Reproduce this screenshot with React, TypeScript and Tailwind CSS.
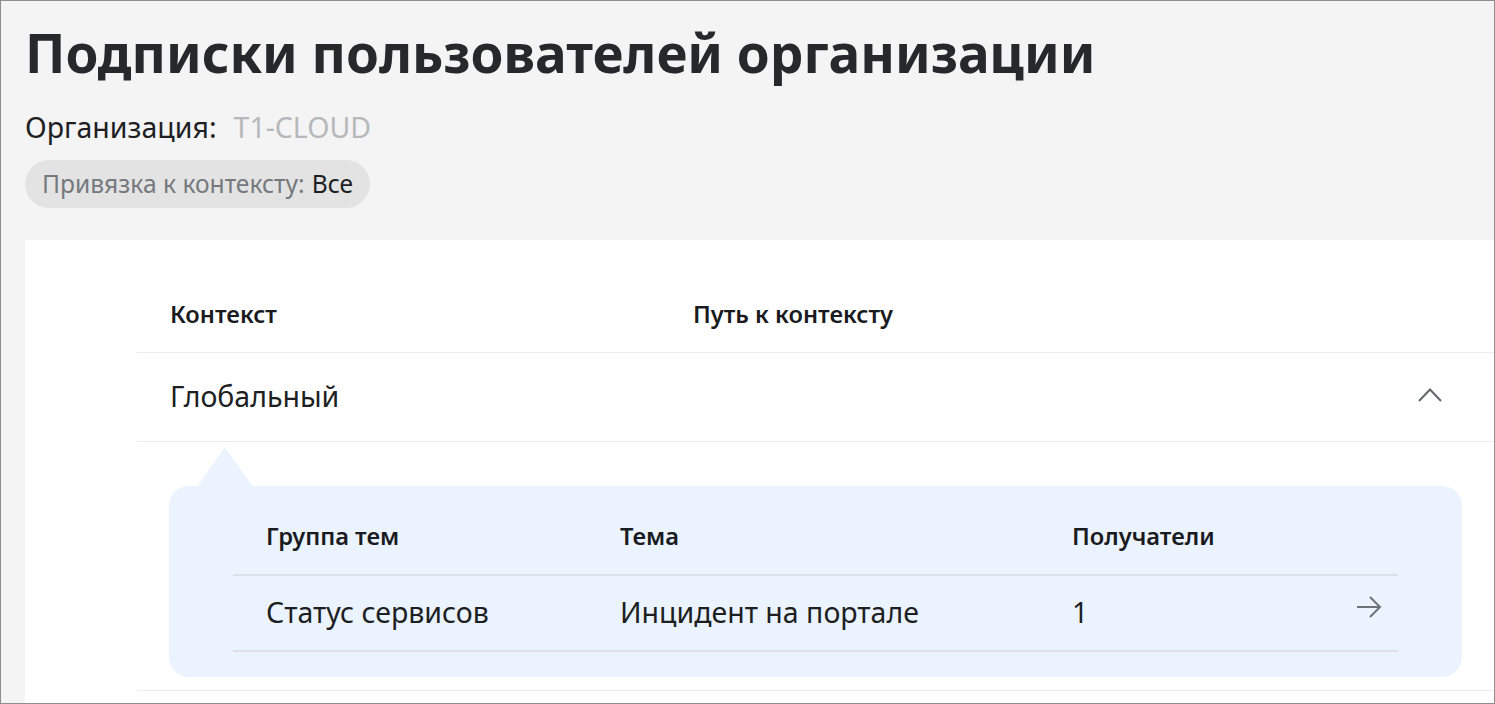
import * as React from 'react'

function ChevronUp() {
  return (
    <svg width="24" height="14" viewBox="0 0 24 14" fill="none">
      <polyline points="1,13 12,1.5 23,13" stroke="#63666b" strokeWidth="2" />
    </svg>
  )
}

function ArrowRight() {
  return (
    <svg width="26" height="22" viewBox="0 0 26 22" fill="none">
      <line x1="1" y1="11" x2="24" y2="11" stroke="#6f7276" strokeWidth="2" />
      <polyline points="14,1 24,11 14,21" stroke="#6f7276" strokeWidth="2" />
    </svg>
  )
}

const subscriptions = [{ group: 'Статус сервисов', topic: 'Инцидент на портале', recipients: 1 }]

export default function App() {
  return (
    <div
      className="h-[704px] w-[1495px] overflow-hidden border border-[#8e8e8e] bg-[#f4f4f4] pl-[24px] text-[#1d1f23]"
      style={{ fontFamily: '"Noto Sans", "Open Sans", sans-serif' }}
    >
      <h1 className="mt-[26px] text-[53px] font-bold leading-[52px] text-[#27282b]">
        Подписки пользователей организации
      </h1>

      <div className="mt-[32px] flex items-center gap-[17px] text-[28.5px] leading-[32px]">
        <span>Организация:</span>
        <span className="text-[#b6b8bc]">T1-CLOUD</span>
      </div>

      <div className="mt-[17px] inline-flex h-[48px] items-center rounded-full bg-[#e3e3e3] px-[17px] text-[24.6px]">
        <span className="text-[#75787d]">Привязка к контексту:</span>
        <span className="ml-[7px] text-[#1d1f23]">Все</span>
      </div>

      <div className="mt-[32px] bg-white pb-[40px] pl-[112px] pt-[40px]">
        <div className="flex h-[73px] items-center border-b border-[#ececec] pb-[3px] text-[23.7px] font-semibold text-[#1a1b1e]">
          <div className="w-[523px] pl-[33px]">Контекст</div>
          <div className="pl-[33px]">Путь к контексту</div>
        </div>

        <div className="flex h-[89px] items-center justify-between border-b border-[#ececec] pb-[2px] text-[28.5px]">
          <div className="w-[523px] pl-[33px]">Глобальный</div>
          <div className="mb-[2px] mr-[52px]">
            <ChevronUp />
          </div>
        </div>

        <div className="border-b border-[#ececec] px-[32px] pb-[13px] pt-[44px]">
          <div className="relative rounded-[20px] bg-[#ebf3fe] px-[64px] pb-[25px] pt-[14px]">
            <svg
              className="absolute left-[28px] top-[-39px]"
              width="56"
              height="40"
              viewBox="0 0 56 40"
            >
              <polygon points="0,40 28,0 56,40" fill="#ebf3fe" />
            </svg>

            <div className="flex h-[76px] items-center border-b-2 border-[#dde1e7] text-[23.7px] font-semibold text-[#1a1b1e]">
              <div className="w-[354px] pl-[33px]">Группа тем</div>
              <div className="w-[452px] pl-[33px]">Тема</div>
              <div className="pl-[33px]">Получатели</div>
            </div>

            {subscriptions.map((s) => (
              <div
                key={s.topic}
                className="flex h-[76px] items-center border-b-2 border-[#dde1e7] pb-[2px] text-[28.5px]"
              >
                <div className="w-[354px] pl-[33px]">{s.group}</div>
                <div className="w-[452px] pl-[33px]">{s.topic}</div>
                <div className="flex-1 pl-[33px]">{s.recipients}</div>
                <div className="mb-[10px] mr-[16px]">
                  <ArrowRight />
                </div>
              </div>
            ))}
          </div>
        </div>
      </div>
    </div>
  )
}
